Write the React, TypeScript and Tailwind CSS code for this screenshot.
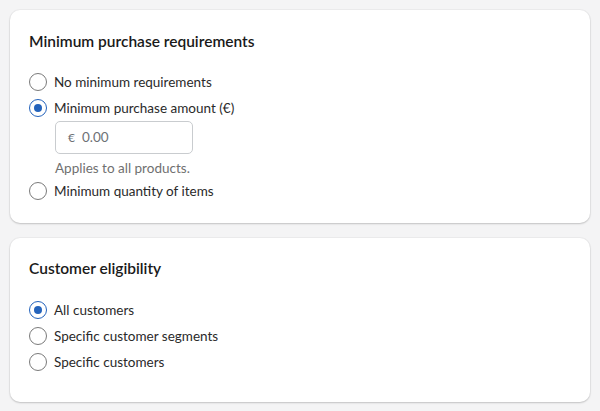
import React from 'react';

type Option = { label: string; checked?: boolean };

function Radio({ checked }: { checked?: boolean }) {
  return (
    <span
      className={`flex h-[18px] w-[18px] shrink-0 items-center justify-center rounded-full border-[1.5px] bg-white ${
        checked ? 'border-[#2463bc]' : 'border-[#7a7a7a]'
      }`}
    >
      {checked && <span className="h-[8px] w-[8px] rounded-full bg-[#2463bc]" />}
    </span>
  );
}

function RadioRow({ label, checked }: Option) {
  return (
    <label className="flex h-[26px] items-center gap-[7px]">
      <Radio checked={checked} />
      <span className="text-[13.5px] text-[#2a2a2a]">{label}</span>
    </label>
  );
}

export default function App() {
  const eligibility: Option[] = [
    { label: 'All customers', checked: true },
    { label: 'Specific customer segments' },
    { label: 'Specific customers' },
  ];

  return (
    <div
      className="min-h-[411px] bg-[#f4f4f5] p-[10px] space-y-[15px]"
      style={{ fontFamily: 'Lato, "Noto Sans", sans-serif' }}
    >
      {/* Minimum purchase requirements */}
      <section className="rounded-[10px] bg-white px-[19px] pt-[21px] pb-[19px] shadow-[0_1px_2px_rgba(0,0,0,0.18),0_0_0_1px_rgba(0,0,0,0.03)]">
        <h2 className="text-[15.5px] leading-[20px] font-semibold text-[#1a1a1a]">Minimum purchase requirements</h2>
        <div className="mt-[18px]">
          <RadioRow label="No minimum requirements" />
          <RadioRow label="Minimum purchase amount (€)" checked />
          <div className="pl-[26px]">
            <div className="flex h-[33px] w-[138px] items-center gap-[7px] rounded-[5px] border border-[#c9cccf] px-[12px] text-[13.5px] text-[#6d7175]">
              <span className="text-[12px]">€</span>
              <span>0.00</span>
            </div>
            <p className="mt-[4px] text-[13.5px] leading-[20px] text-[#707070]">Applies to all products.</p>
          </div>
          <RadioRow label="Minimum quantity of items" />
        </div>
      </section>

      {/* Customer eligibility */}
      <section className="rounded-[10px] bg-white px-[19px] pt-[20px] pb-[27px] shadow-[0_1px_2px_rgba(0,0,0,0.18),0_0_0_1px_rgba(0,0,0,0.03)]">
        <h2 className="text-[15.5px] leading-[20px] font-semibold text-[#1a1a1a]">Customer eligibility</h2>
        <div className="mt-[19px]">
          {eligibility.map((o) => (
            <RadioRow key={o.label} label={o.label} checked={o.checked} />
          ))}
        </div>
      </section>
    </div>
  );
}
